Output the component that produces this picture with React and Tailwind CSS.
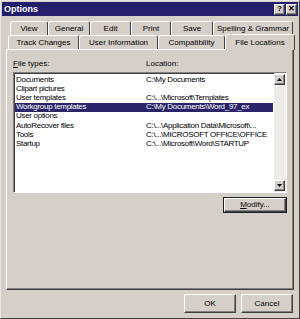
import React from "react";

const rows1 = [
  { label: "View", w: "w-[38px]" },
  { label: "General", w: "w-[42px]" },
  { label: "Edit", w: "w-[41px]" },
  { label: "Print", w: "w-[40px]" },
  { label: "Save", w: "w-[42px]" },
  { label: "Spelling & Grammar", w: "w-[80px]" },
];

const rows2 = [
  { label: "Track Changes", w: "w-[71px]" },
  { label: "User Information", w: "w-[79px]" },
  { label: "Compatibility", w: "w-[67px]" },
  { label: "File Locations", w: "w-[70px]", selected: true },
];

const files = [
  ["Documents", "C:\\My Documents"],
  ["Clipart pictures", ""],
  ["User templates", "C:\\...\\Microsoft\\Templates"],
  ["Workgroup templates", "C:\\My Documents\\Word_97_ex", true],
  ["User options", ""],
  ["AutoRecover files", "C:\\...\\Application Data\\Microsoft\\..."],
  ["Tools", "C:\\...\\MICROSOFT OFFICE\\OFFICE"],
  ["Startup", "C:\\...\\Microsoft\\Word\\STARTUP"],
];

const Tab = ({ label, w, selected }) => {
  return (
    <div
      className={`${w} flex items-center justify-center border-t border-l border-r border-t-white border-l-white border-r-[#404040] rounded-t-[3px] whitespace-nowrap ${
        selected ? "h-[16px] relative z-10 -mb-px bg-[#d4d0c8]" : "h-[14px]"
      }`}
    >
      {label}
    </div>
  );
};

const WinButton = ({ children, className }) => {
  return (
    <div
      className={`flex items-center justify-center bg-[#d4d0c8] border border-t-white border-l-white border-r-[#404040] border-b-[#404040] shadow-[inset_-1px_-1px_0_#808080] ${className}`}
    >
      {children}
    </div>
  );
};

const App = () => {
  return (
    <div className="w-[300px] h-[319px] bg-[#d4d0c8] border border-t-[#e8e6e0] border-l-[#e8e6e0] border-r-[#404040] border-b-[#404040] p-px text-[8px] text-black font-['Liberation_Sans',Arial,sans-serif] overflow-hidden">
      {/* Title bar */}
      <div className="h-[14px] bg-[#241d6c] flex items-center justify-between pl-[2px] pr-[1px]">
        <span className="text-white font-bold text-[9px] leading-none">Options</span>
        <div className="flex gap-[1px]">
          <WinButton className="w-[11px] h-[11px] text-[8px] font-bold leading-none">?</WinButton>
          <WinButton className="w-[11px] h-[11px] text-[8px] font-bold leading-none">✕</WinButton>
        </div>
      </div>

      {/* Tabs */}
      <div className="mt-[5px] ml-[8px] flex">
        {rows1.map((t) => (
          <Tab key={t.label} {...t} />
        ))}
      </div>
      <div className="ml-[6px] flex items-end h-[14px]">
        {rows2.map((t) => (
          <Tab key={t.label} {...t} />
        ))}
      </div>

      {/* Panel */}
      <div className="ml-[4px] w-[288px] h-[241px] border border-t-white border-l-white border-r-[#404040] border-b-[#404040] shadow-[inset_-1px_-1px_0_#808080] px-[6px] pt-[9px] flex flex-col">
        <div className="flex h-[10px] items-center">
          <span className="w-[133px]">
            <span className="underline">F</span>ile types:
          </span>
          <span>Location:</span>
        </div>
        <div className="mt-[3px] h-[121px] bg-white border border-t-[#808080] border-l-[#808080] border-r-white border-b-white shadow-[inset_1px_1px_0_#404040] flex">
          <div className="flex-1 pt-[2px] pl-[1px] pr-[1px] tracking-[-0.3px]">
            {files.map(([name, loc, sel]) => (
              <div
                key={name}
                className={`flex h-[9.2px] items-center whitespace-nowrap ${
                  sel ? "bg-[#2a2468] text-white" : ""
                }`}
              >
                <span className="w-[131px] pl-[1px]">{name}</span>
                <span>{loc}</span>
              </div>
            ))}
          </div>
          <div className="w-[12px] bg-[#ecebe7] flex flex-col justify-between pt-[1px] pb-[1px]">
            <WinButton className="w-[11px] h-[11px]">
              <svg width="5" height="3" viewBox="0 0 5 3">
                <path d="M2.5 0 L5 3 L0 3 Z" fill="#000" />
              </svg>
            </WinButton>
            <WinButton className="w-[11px] h-[11px]">
              <svg width="5" height="3" viewBox="0 0 5 3">
                <path d="M0 0 L5 0 L2.5 3 Z" fill="#000" />
              </svg>
            </WinButton>
          </div>
        </div>
        <div className="mt-[4px] flex justify-end">
          <div className="border border-[#202020]">
            <WinButton className="w-[62px] h-[14px]">
              <span>
                <span className="underline">M</span>odify...
              </span>
            </WinButton>
          </div>
        </div>
      </div>

      {/* Bottom buttons */}
      <div className="mt-[4px] flex justify-end gap-[5px] pr-[5px]">
        <WinButton className="w-[52px] h-[19px]">OK</WinButton>
        <WinButton className="w-[52px] h-[19px]">Cancel</WinButton>
      </div>
    </div>
  );
};

export default App;
